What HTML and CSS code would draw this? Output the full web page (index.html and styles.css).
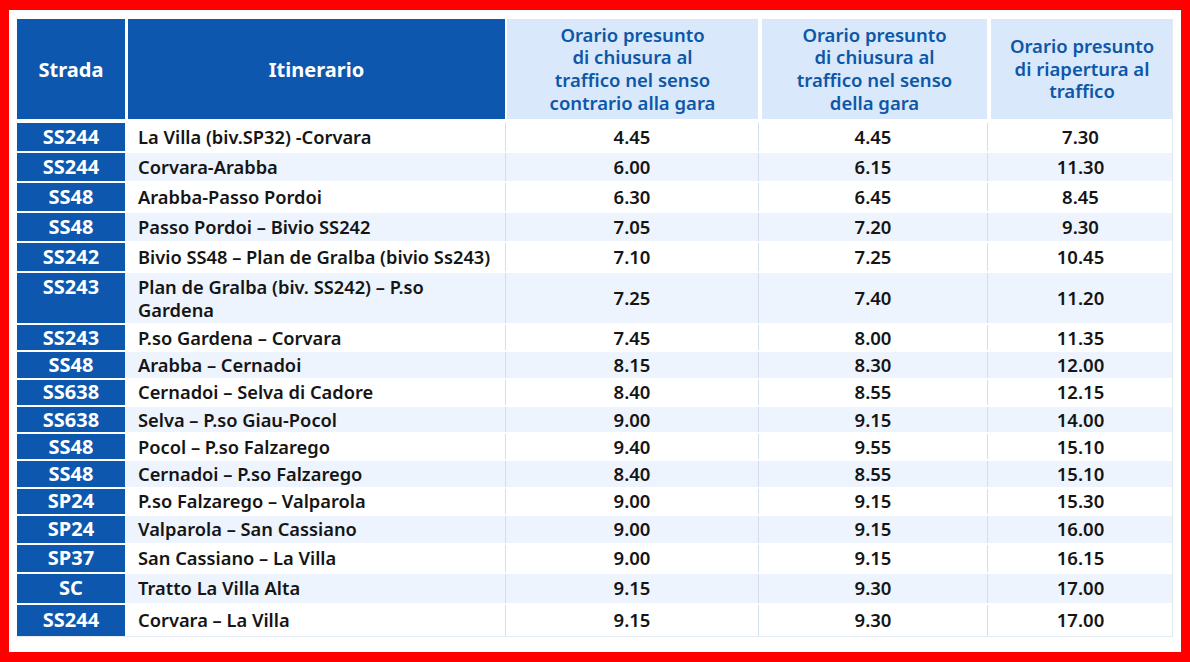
FILE: index.html
```html
<!DOCTYPE html>
<html lang="it">
<head>
<meta charset="utf-8">
<title>Orari di chiusura strade</title>
<link rel="stylesheet" href="styles.css">
</head>
<body>
<div class="frame">
  <div class="sheet">
    <div class="table">
      <div class="row head">
        <div class="hc dark">Strada</div>
        <div class="hc dark">Itinerario</div>
        <div class="hc light">Orario presunto<br>di chiusura al<br>traffico nel senso<br>contrario alla gara</div>
        <div class="hc light">Orario presunto<br>di chiusura al<br>traffico nel senso<br>della gara</div>
        <div class="hc light">Orario presunto<br>di riapertura al<br>traffico</div>
      </div>

      <div class="row lead"><div class="road">SS244</div><div class="route">La Villa (biv.SP32) -Corvara</div><div class="t">4.45</div><div class="t">4.45</div><div class="t">7.30</div></div>
      <div class="row lead alt"><div class="road">SS244</div><div class="route">Corvara-Arabba</div><div class="t">6.00</div><div class="t">6.15</div><div class="t">11.30</div></div>
      <div class="row lead"><div class="road">SS48</div><div class="route">Arabba-Passo Pordoi</div><div class="t">6.30</div><div class="t">6.45</div><div class="t">8.45</div></div>
      <div class="row lead alt"><div class="road">SS48</div><div class="route">Passo Pordoi – Bivio SS242</div><div class="t">7.05</div><div class="t">7.20</div><div class="t">9.30</div></div>
      <div class="row lead"><div class="road">SS242</div><div class="route">Bivio SS48 – Plan de Gralba (bivio Ss243)</div><div class="t">7.10</div><div class="t">7.25</div><div class="t">10.45</div></div>
      <div class="row double alt"><div class="road top">SS243</div><div class="route two">Plan de Gralba (biv. SS242) – P.so<br>Gardena</div><div class="t">7.25</div><div class="t">7.40</div><div class="t">11.20</div></div>
      <div class="row"><div class="road">SS243</div><div class="route">P.so Gardena – Corvara</div><div class="t">7.45</div><div class="t">8.00</div><div class="t">11.35</div></div>
      <div class="row alt"><div class="road">SS48</div><div class="route">Arabba – Cernadoi</div><div class="t">8.15</div><div class="t">8.30</div><div class="t">12.00</div></div>
      <div class="row"><div class="road">SS638</div><div class="route">Cernadoi – Selva di Cadore</div><div class="t">8.40</div><div class="t">8.55</div><div class="t">12.15</div></div>
      <div class="row alt"><div class="road">SS638</div><div class="route">Selva – P.so Giau-Pocol</div><div class="t">9.00</div><div class="t">9.15</div><div class="t">14.00</div></div>
      <div class="row"><div class="road">SS48</div><div class="route">Pocol – P.so Falzarego</div><div class="t">9.40</div><div class="t">9.55</div><div class="t">15.10</div></div>
      <div class="row alt"><div class="road">SS48</div><div class="route">Cernadoi – P.so Falzarego</div><div class="t">8.40</div><div class="t">8.55</div><div class="t">15.10</div></div>
      <div class="row"><div class="road">SP24</div><div class="route">P.so Falzarego – Valparola</div><div class="t">9.00</div><div class="t">9.15</div><div class="t">15.30</div></div>
      <div class="row mid alt"><div class="road">SP24</div><div class="route">Valparola – San Cassiano</div><div class="t">9.00</div><div class="t">9.15</div><div class="t">16.00</div></div>
      <div class="row mid2"><div class="road">SP37</div><div class="route">San Cassiano – La Villa</div><div class="t">9.00</div><div class="t">9.15</div><div class="t">16.15</div></div>
      <div class="row big alt"><div class="road">SC</div><div class="route">Tratto La Villa Alta</div><div class="t">9.15</div><div class="t">9.30</div><div class="t">17.00</div></div>
      <div class="row last"><div class="road">SS244</div><div class="route">Corvara – La Villa</div><div class="t">9.15</div><div class="t">9.30</div><div class="t">17.00</div></div>
    </div>
  </div>
</div>
</body>
</html>
```
FILE: styles.css
```css
* { box-sizing: border-box; }

html, body {
  margin: 0;
  padding: 0;
  background: #ff0000;
}

.frame {
  width: 1190px;
  height: 662px;
  padding: 10px 9px 10px 9px;
}

.sheet {
  background: #ffffff;
  height: 100%;
  padding: 9px 8px 0 8px;
}

.table {
  display: flex;
  flex-direction: column;
  gap: 2px;
  font-family: "Noto Sans", "Open Sans", sans-serif;
  border-bottom: 1px solid #e3eaf3;
  border-right: 1px solid #e3eaf3;
}

.row {
  display: grid;
  grid-template-columns: 108px 380px 253px 229px 186px;
  grid-template-rows: 100%;
  height: 25.3px;
  background: #ffffff;
  overflow: hidden;
}

.row.alt { background: #edf4fd; }
.row.lead { height: 28px; }
.row.double { height: 50px; }
.row.mid { height: 26.6px; }
.row.mid2 { height: 27.4px; }
.row.big { height: 28.6px; }
.row.last { height: 31.6px; }

.row.head {
  height: 100px;
  margin-bottom: 2px;
  background: #ffffff;
}

.hc {
  display: flex;
  align-items: center;
  justify-content: center;
  text-align: center;
}

.hc.dark {
  background: #0d58ae;
  color: #ffffff;
  font-weight: 700;
  font-size: 20px;
}

.hc.light {
  background: #d9e8fa;
  color: #0d57a8;
  font-weight: 600;
  font-size: 18.5px;
  line-height: 22.6px;
}

.hc:nth-child(2) { border-left: 3px solid #ffffff; }
.hc:nth-child(3) { border-left: 2px solid #ffffff; }
.hc:nth-child(4) { border-left: 4px solid #ffffff; }
.hc:nth-child(5) { border-left: 4px solid #ffffff; }

.road {
  background: #0d58ae;
  color: #ffffff;
  font-weight: 700;
  font-size: 20px;
  line-height: 22px;
  display: flex;
  align-items: center;
  justify-content: center;
}

.road.top {
  align-items: flex-start;
  padding-top: 3px;
}

.route {
  display: flex;
  align-items: center;
  padding-left: 13px;
  font-weight: 600;
  font-size: 18.3px;
  line-height: 22px;
  color: #151515;
}

.route.two { line-height: 23px; }

.t {
  display: flex;
  align-items: center;
  justify-content: center;
  font-weight: 600;
  font-size: 18.5px;
  line-height: 22px;
  color: #151515;
  border-left: 1px solid #d3dfee;
}
```
